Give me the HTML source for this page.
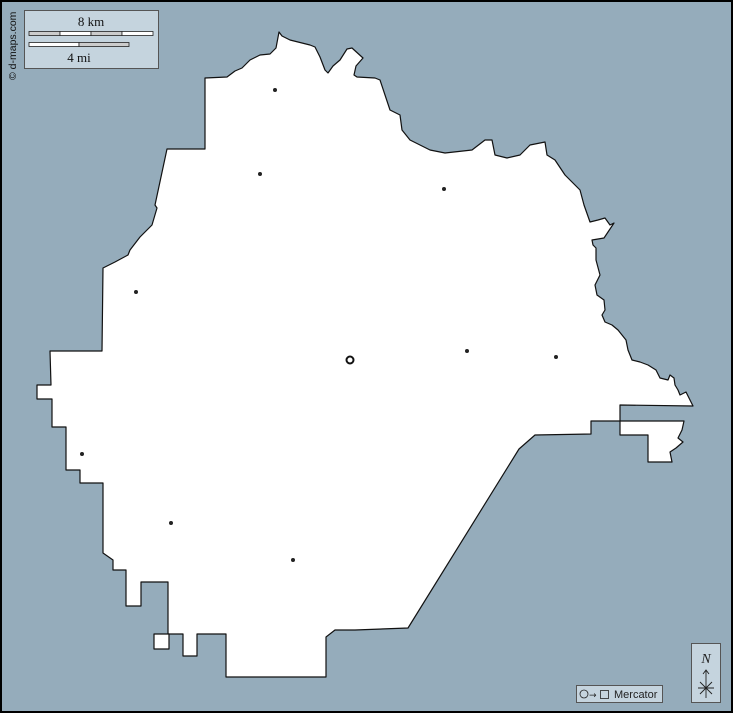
<!DOCTYPE html>
<html><head><meta charset="utf-8"><style>
html,body{margin:0;padding:0;background:#000;}
#m{position:absolute;left:0;top:0;width:733px;height:713px;}
</style></head><body>
<svg id="m" width="733" height="713" viewBox="0 0 733 713" xmlns="http://www.w3.org/2000/svg">
<rect x="0" y="0" width="733" height="713" fill="#000"/>
<rect x="2" y="2" width="729" height="709" fill="#95acbb"/>
<g fill="#fff" stroke="#111" stroke-width="1.2" stroke-linejoin="round">
<path d="M205,78 L227,77 L235,71 L242,68 L250,60 L260,55 L270,54 L276,48 L279,32 L282,36 L290,40 L310,45 L315,47 L320,57 L325,70 L328,73 L333,66 L340,60 L347,49 L352,48 L363,58 L356,66 L354,75 L357,77 L375,78 L380,80 L385,95 L390,110 L400,115 L402,130 L410,140 L420,145 L430,150 L445,153 L472,150 L485,140 L492,140 L495,155 L507,158 L520,155 L530,145 L545,142 L547,155 L555,160 L565,175 L580,190 L584,205 L590,222 L598,220 L605,218 L610,225 L614,223 L608,232 L604,238 L592,240 L593,245 L596,248 L596,260 L600,275 L595,285 L597,295 L604,300 L605,310 L602,315 L605,322 L612,325 L618,330 L622,335 L626,340 L628,350 L632,360 L640,362 L648,365 L656,370 L660,378 L668,380 L670,375 L674,378 L675,385 L678,390 L680,395 L686,392 L690,400 L693,406 L620,405 L620,421 L591,421 L591,434 L535,435 L519,449 L408,628 L355,630 L345,630 L335,630 L326,637 L326,677 L226,677 L226,634 L197,634 L197,656 L183,656 L183,634 L168,634 L168,582 L141,582 L141,606 L126,606 L126,570 L113,570 L113,560 L103,553 L103,483 L80,483 L80,470 L66,470 L66,427 L52,427 L52,399 L37,399 L37,385 L51,385 L50,351 L102,351 L103,268 L115,262 L128,255 L130,250 L140,237 L152,225 L157,208 L155,205 L167,149 L205,149 Z"/>
<path d="M620,421 L684,421 L682,430 L678,438 L683,442 L676,448 L670,452 L672,462 L648,462 L648,435 L620,435 Z"/>
<rect x="154" y="634" width="15" height="15"/>
</g>
<g fill="#222">
<circle cx="275" cy="90" r="2"/><circle cx="260" cy="174" r="2"/><circle cx="444" cy="189" r="2"/>
<circle cx="136" cy="292" r="2"/><circle cx="467" cy="351" r="2"/><circle cx="556" cy="357" r="2"/>
<circle cx="82" cy="454" r="2"/><circle cx="171" cy="523" r="2"/><circle cx="293" cy="560" r="2"/>
</g>
<circle cx="350" cy="360" r="3.5" fill="#fff" stroke="#111" stroke-width="2"/>
<rect x="24.5" y="10.5" width="134" height="58" fill="#c5d4de" stroke="#555"/>
<text x="91" y="26" font-family="Liberation Serif" font-size="13" text-anchor="middle" fill="#111">8 km</text>
<g stroke="#222" stroke-width="0.8">
<rect x="29" y="31.5" width="31" height="4" fill="#ccc"/><rect x="60" y="31.5" width="31" height="4" fill="#fff"/>
<rect x="91" y="31.5" width="31" height="4" fill="#ccc"/><rect x="122" y="31.5" width="31" height="4" fill="#fff"/>
<rect x="29" y="42.5" width="50" height="4" fill="#fff"/><rect x="79" y="42.5" width="50" height="4" fill="#ccc"/>
</g>
<text x="79" y="62" font-family="Liberation Serif" font-size="13" text-anchor="middle" fill="#111">4 mi</text>
<text transform="translate(16,80) rotate(-90)" font-family="Liberation Sans" font-size="10.5" fill="#111">© d-maps.com</text>
<rect x="576.5" y="685.5" width="86" height="17" fill="#c5d4de" stroke="#555"/>
<circle cx="584" cy="694" r="4" fill="none" stroke="#222" stroke-width="0.8"/>
<text x="589" y="698" font-family="DejaVu Sans" font-size="9" fill="#222">→</text>
<rect x="600.5" y="690.5" width="8" height="8" fill="none" stroke="#222" stroke-width="0.8"/>
<text x="614" y="698" font-family="Liberation Sans" font-size="11" fill="#222">Mercator</text>
<rect x="691.5" y="643.5" width="29" height="59" fill="#c5d4de" stroke="#555"/>
<text x="706" y="663" font-family="Liberation Serif" font-style="italic" font-size="14" text-anchor="middle" fill="#222">N</text>
<g stroke="#222" stroke-width="0.9" fill="none">
<path d="M706,698 V670 M703,674 L706,670 L709,674 M698,688 H714 M700,682 L712,694 M712,682 L700,694"/>
</g>
</svg>
</body></html>
